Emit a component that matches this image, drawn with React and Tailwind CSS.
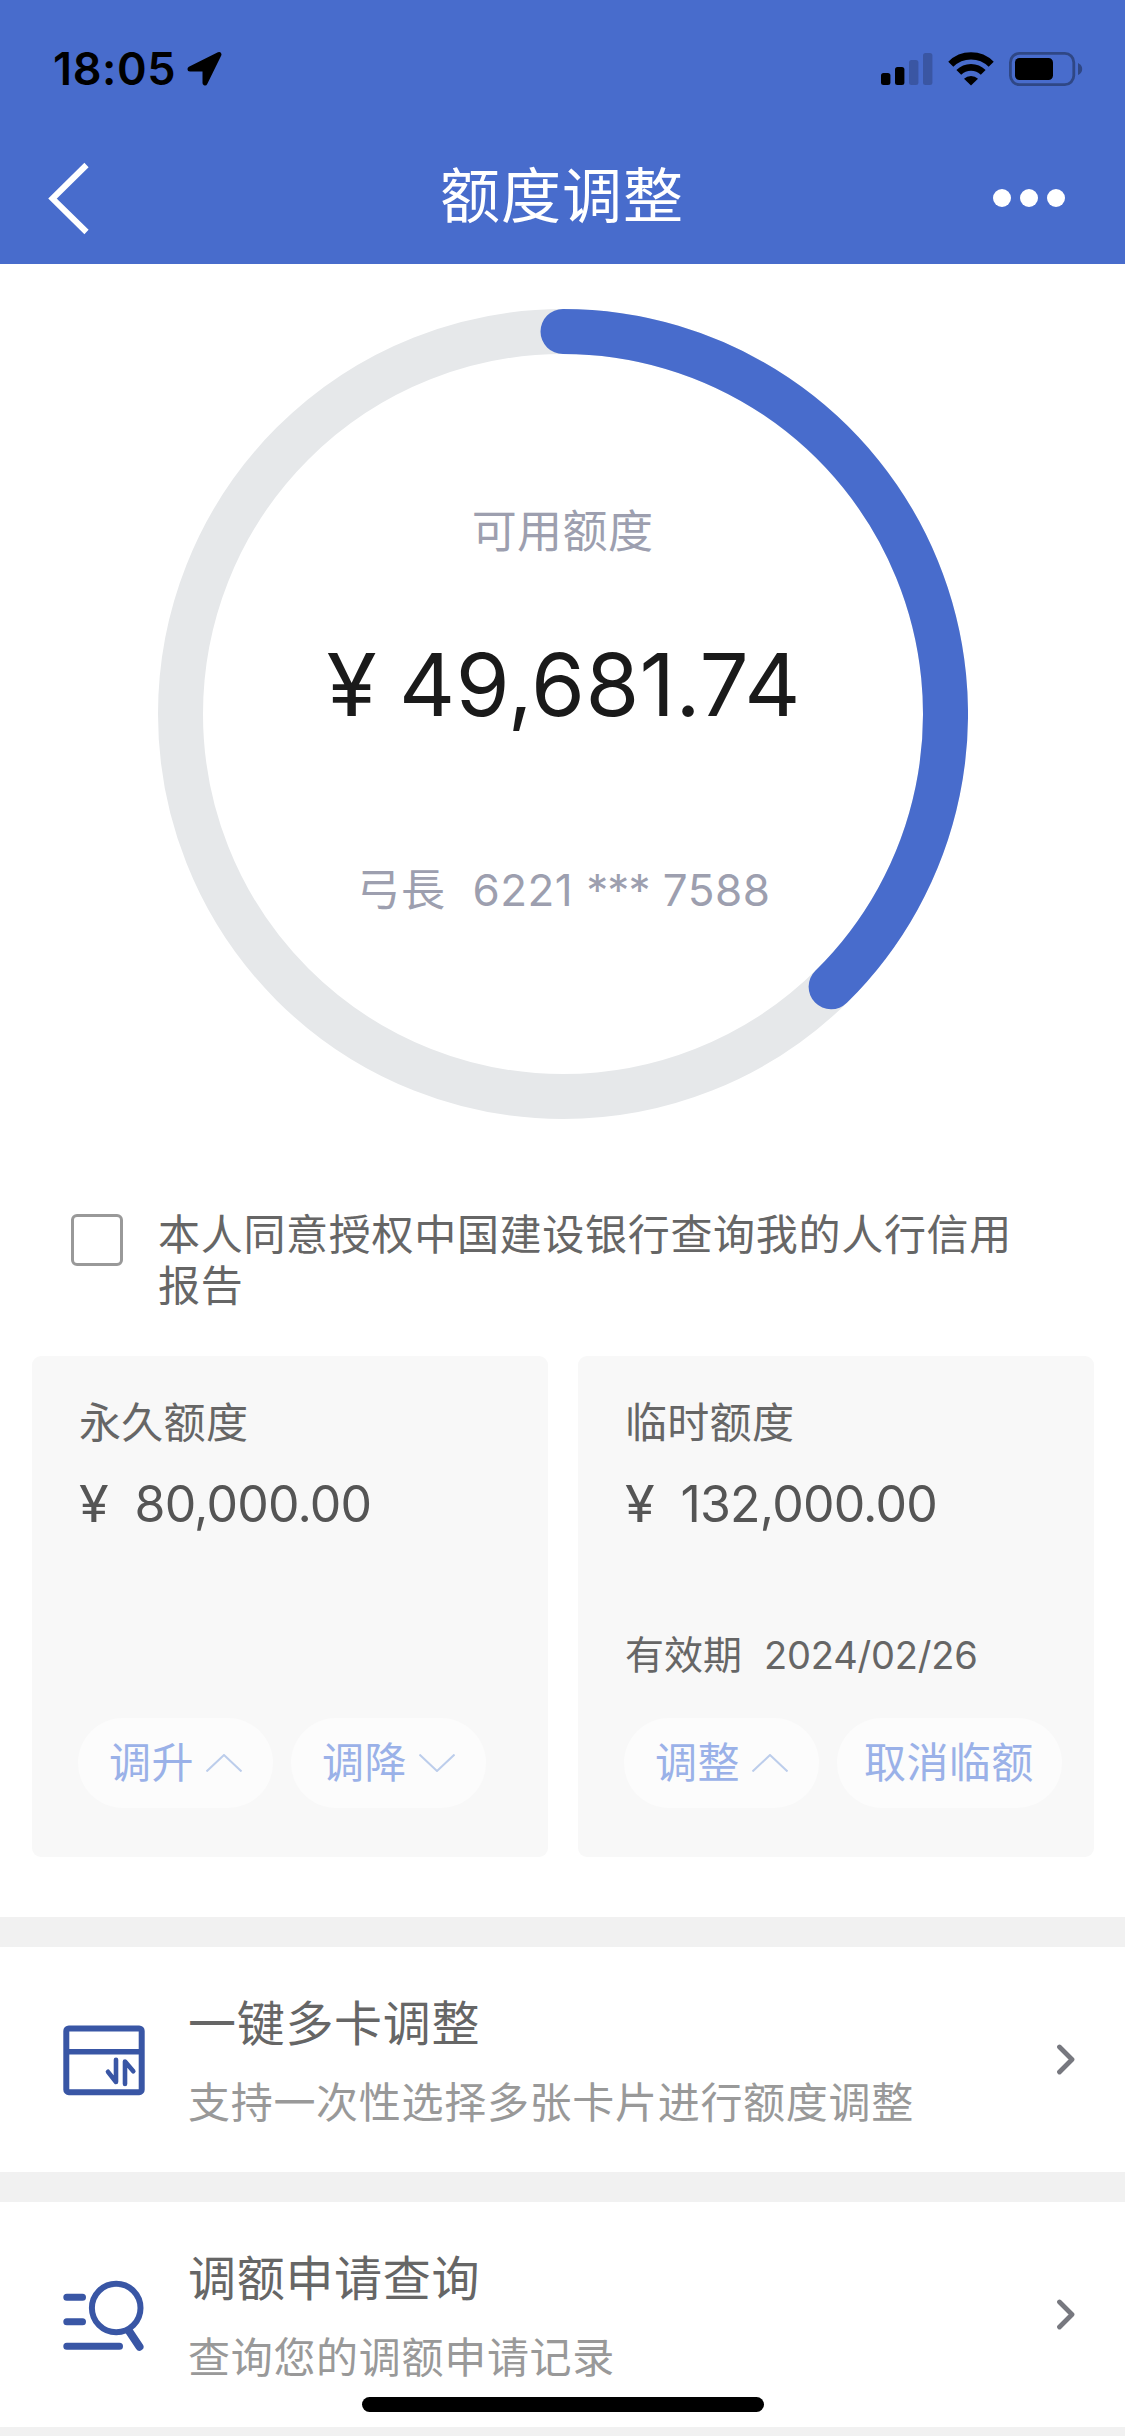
import React from 'react';

const TOTAL_LIMIT = 132000;
const AVAILABLE = 49681.74;

function StatusBar() {
  return (
    <div className="flex h-[132px] items-center justify-between pt-[6px] pr-[42px] pl-[53px]">
      <div className="flex items-center gap-[11px]">
        <span className="w-[123px] text-[45px] leading-[54px] font-semibold tracking-[0.6px] whitespace-nowrap text-black">18:05</span>
        <svg className="h-[36px] w-[36px]" viewBox="0 0 36 36">
          <path d="M32 3.500 L18 32 V18 H3 Z" fill="#000" stroke="#000" strokeWidth="5" strokeLinejoin="round" />
        </svg>
      </div>

      <div className="flex items-center">
        {/* Signal */}
        <svg className="mr-[15px] h-[34px] w-[52px]" viewBox="0 0 52 34">
          <rect x="0" y="21" width="9.4" height="12" rx="2.5" />
          <rect x="14" y="15" width="9.4" height="18" rx="2.5" />
          <rect x="28" y="8" width="9.4" height="25" rx="2.5" fill="#3a56a3" />
          <rect x="42" y="1" width="9.4" height="32" rx="2.5" fill="#3a56a3" />
        </svg>
        {/* Wifi */}
        <svg className="mr-[15px] h-[34px] w-[46px]" viewBox="0 0 46 34">
          <path d="M2.8 12.2 A28.6 28.6 0 0 1 43.2 12.2" fill="none" stroke="#000" strokeWidth="7.2" />
          <path d="M10.8 20.4 A17.3 17.3 0 0 1 35.2 20.4" fill="none" stroke="#000" strokeWidth="6.8" />
          <path d="M16 26.8 A10 10 0 0 1 30 26.8 L23 33.6 Z" />
        </svg>
        {/* Battery */}
        <svg className="h-[34px] w-[74px]" viewBox="0 0 74 34">
          <rect x="1.4" y="1.4" width="63.4" height="31.2" rx="9" fill="none" stroke="#2f4785" strokeWidth="2.8" />
          <rect x="6" y="6" width="38" height="22" rx="4.5" />
          <path d="M69 11 Q73.200 13 73.200 17 Q73.200 21 69 23 Z" fill="#2f4785" />
        </svg>
      </div>
    </div>
  );
}

function TitleBar() {
  return (
    <div className="flex h-[132px] items-center justify-between pr-[60px] pl-[47px]">
      <svg className="h-[74px] w-[74px]" viewBox="0 0 74 74">
        <path d="M39.500 4 L5.500 37.600 L39.500 71" fill="none" stroke="#fff" strokeWidth="6" />
      </svg>
      <h1 className="mt-[-5px] ml-[10px] text-[60px] leading-[72px] tracking-[1px] text-white">额度调整</h1>
      <div className="flex gap-[9px]">
        <i className="size-[18px] rounded-full bg-white" />
        <i className="size-[18px] rounded-full bg-white" />
        <i className="size-[18px] rounded-full bg-white" />
      </div>
    </div>
  );
}

function LimitRing() {
  const angle = (AVAILABLE / TOTAL_LIMIT) * 2 * Math.PI;
  const endX = 405 + 382.5 * Math.sin(angle);
  const endY = 405 - 382.5 * Math.cos(angle);

  return (
    <section className="grid justify-center pt-[45px]">
      <svg className="col-start-1 row-start-1 h-[810px] w-[810px]" viewBox="0 0 810 810">
        <circle cx="405" cy="405" r="382.5" fill="none" stroke="#e6e8ea" strokeWidth="45" />
        <path
          d={`M405 22.5 A382.5 382.5 0 0 1 ${endX} ${endY}`}
          fill="none"
          stroke="#486ccc"
          strokeWidth="45"
          strokeLinecap="round"
        />
      </svg>
      <div className="col-start-1 row-start-1 flex flex-col items-center pt-[196px]">
        <p className="text-[45px] leading-[54px] tracking-[0.4px] text-[#9d9faf]">可用额度</p>
        <p className="mt-[72px] flex items-baseline gap-[22px] pl-[5px] text-[87px] leading-[108px] text-[#1a1a1a]">
          <span className="origin-right scale-x-105">¥</span>
          <span className="tracking-[0.4px]">49,681.74</span>
        </p>
        <p className="mt-[124px] flex gap-[27px] pl-[2px] text-[44px] leading-[54px] text-[#9d9faf]">
          <span className="tracking-[0.4px]">弓長</span>
          <span className="tracking-[0.5px]">
            6221 <span className="tracking-[-0.8px]">***</span> 7588
          </span>
        </p>
      </div>
    </section>
  );
}

function Consent() {
  return (
    <label className="mt-[89px] flex pl-[71px]">
      <span className="mt-[6px] size-[52px] shrink-0 rounded-[6px] border-[3px] border-[#999]" />
      <span className="ml-[35px] w-[880px] pt-[2px] text-[42px] leading-[50.5px] tracking-[0.7px] text-[#666]">
        本人同意授权中国建设银行查询我的人行信用报告
      </span>
    </label>
  );
}

function Caret({ down }) {
  return (
    <svg className="h-[18px] w-[36px]" viewBox="0 0 36 18">
      <path d={down ? 'M0.5 0.500 L18 17 L35.500 0.500' : 'M0.5 17.500 L18 1 L35.500 17.500'} fill="none" stroke="#bccdeb" strokeWidth="2" />
    </svg>
  );
}

function PillButton({ children, caret }) {
  return (
    <button className={`flex h-[90px] items-center gap-[12px] rounded-full bg-[#fcfcfc] text-[42px] leading-[50px] tracking-[0.4px] text-[#9ab1e8] ${caret ? 'w-[195px] pl-[31px]' : 'w-[225px] pl-[27px]'}`}>
      <span className="whitespace-nowrap">{children}</span>
      {caret && <Caret down={caret === 'down'} />}
    </button>
  );
}

function LimitCard({ title, amount, expiry, children }) {
  return (
    <div className="flex h-[501px] w-[516px] flex-col rounded-[9px] bg-[#f8f8f8] pt-[42px] pl-[47px]">
      <h2 className="text-[42px] leading-[50px] tracking-[0.3px] text-[#666]">{title}</h2>
      <p className="mt-[26px] flex items-baseline gap-[28px] text-[50px] leading-[60px] text-[#555]">
        <span className="origin-left scale-x-108">¥</span>
        <span className="tracking-[-0.8px]">{amount}</span>
      </p>
      <div className="mt-[97px] flex h-[48px] items-center gap-[22px] text-[39px] leading-[48px] text-[#666]">
        {expiry && (
          <>
            <span>有效期</span>
            <span className="text-[38px] tracking-[-0.2px]">{expiry}</span>
          </>
        )}
      </div>
      <div className="mt-[39px] ml-[-1px] flex gap-[18px]">{children}</div>
    </div>
  );
}

function CardAdjustIcon() {
  return (
    <svg className="h-[72px] w-[84px]" viewBox="0 0 84 72" fill="none" stroke="#3956a5" strokeLinecap="round" strokeLinejoin="round">
      <rect x="4.300" y="4.500" width="75.400" height="63.700" rx="2.5" strokeWidth="6" />
      <path d="M5 27.800 H79" strokeWidth="5.600" />
      <path d="M54 35.800 V58 L46 47.800" strokeWidth="4.600" />
      <path d="M63 60 V37.500 L71.300 47.200" strokeWidth="4.600" />
    </svg>
  );
}

function RecordSearchIcon() {
  return (
    <svg className="h-[72px] w-[84px]" viewBox="0 0 84 72" fill="none" stroke="#3956a5" strokeLinecap="round">
      <path d="M4.800 18.200 H20.500 M4.800 42.800 H20.500 M4.800 67.200 H57.500" strokeWidth="7" />
      <circle cx="54.200" cy="29" r="24.300" strokeWidth="6" />
      <path d="M67 52 L77.500 67.700" strokeWidth="8" />
    </svg>
  );
}

function MenuRow({ icon: Icon, title, description }) {
  return (
    <div className="flex h-[255px] items-center border-t-[30px] border-[#f1f1f1] bg-white pr-[49px] pl-[62px]">
      <Icon />
      <div className="ml-[42px] flex-1 pt-[3px]">
        <h3 className="text-[48px] leading-[58px] tracking-[0.7px] text-[#666]">{title}</h3>
        <p className="mt-[25px] text-[42px] leading-[50px] tracking-[0.7px] text-[#999]">{description}</p>
      </div>
      <svg className="h-[32px] w-[20px]" viewBox="0 0 20 32">
        <path d="M3.500 3 L16 15.500 L3.500 28" fill="none" stroke="#77787f" strokeWidth="4.800" strokeLinecap="round" strokeLinejoin="round" />
      </svg>
    </div>
  );
}

export default function App() {
  return (
    <div className="relative h-[2436px] w-[1125px] overflow-hidden bg-white font-['Inter','Noto_Sans_CJK_SC',sans-serif]">
      <header className="bg-[#486ccc]">
        <StatusBar />
        <TitleBar />
      </header>

      <LimitRing />
      <Consent />

      <section className="mt-[45px] flex gap-[30px] pl-[32px]">
        <LimitCard title="永久额度" amount="80,000.00">
          <PillButton caret="up">调升</PillButton>
          <PillButton caret="down">调降</PillButton>
        </LimitCard>
        <LimitCard title="临时额度" amount="132,000.00" expiry="2024/02/26">
          <PillButton caret="up">调整</PillButton>
          <PillButton>取消临额</PillButton>
        </LimitCard>
      </section>

      <section className="mt-[60px]">
        <MenuRow icon={CardAdjustIcon} title="一键多卡调整" description="支持一次性选择多张卡片进行额度调整" />
        <MenuRow icon={RecordSearchIcon} title="调额申请查询" description="查询您的调额申请记录" />
        <div className="h-[30px] bg-[#f1f1f1]" />
      </section>

      {/* Home indicator */}
      <div className="absolute bottom-[24px] left-[362px] h-[15px] w-[402px] rounded-full bg-black" />
    </div>
  );
}
